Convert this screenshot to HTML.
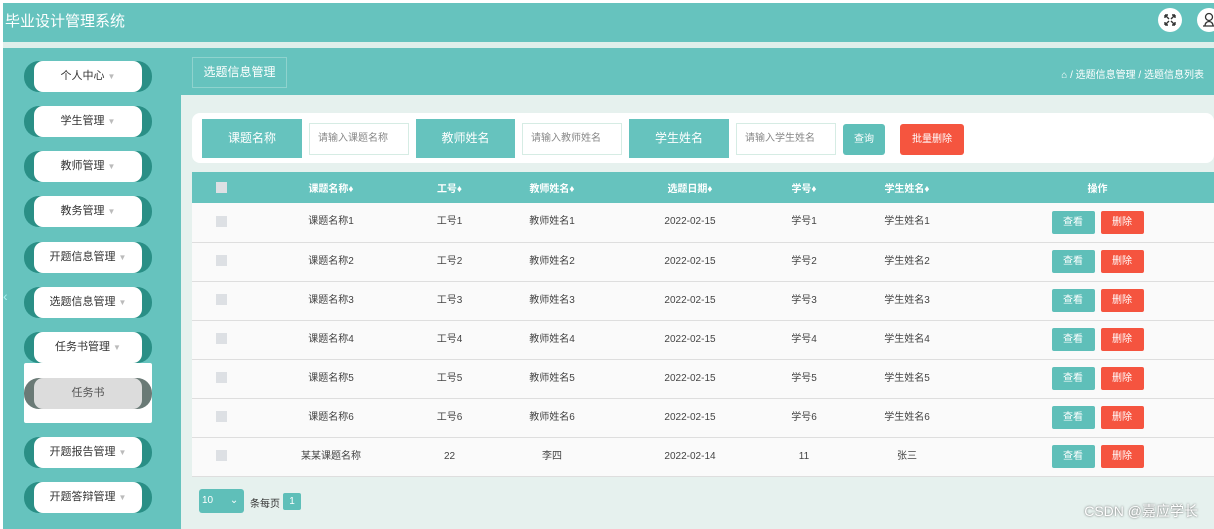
<!DOCTYPE html>
<html><head><meta charset="utf-8"><style>
*{margin:0;padding:0;box-sizing:border-box}
html,body{width:1214px;height:529px;overflow:hidden}
body{background:#fff;font-family:"Liberation Sans","Noto Sans CJK SC",sans-serif;position:relative}
.a{position:absolute}
.top{left:3px;top:3px;width:1211px;height:39px;background:#66c3be}
.title{left:5px;top:10px;color:#fff;font-size:15px}
.ic{top:8px;width:24px;height:24px;border-radius:50%;background:#fff}
.strip{left:3px;top:42px;width:1211px;height:6px;background:#dfefeb}
.side{left:3px;top:48px;width:178px;height:481px;background:#66c3be}
.pill{left:24px;width:128px;height:31px;border-radius:15px;background:#2a8f86}
.pill div{position:absolute;left:10px;right:10px;top:0;bottom:0;background:#fff;border-radius:9px;font-size:11px;color:#333;text-align:center;line-height:31px}
.pill span{color:#bbb;font-size:8px;margin-left:3px}
.main{left:181px;top:95px;width:1033px;height:434px;background:#e6f1ee}
.bc{left:181px;top:48px;width:1033px;height:47px;background:#66c3be}
.bct{left:192px;top:57px;width:95px;height:31px;border:1px solid #8fd3ce;color:#fff;font-size:12px;text-align:center;line-height:29px}
.card{left:192px;top:113px;width:1022px;height:50px;background:#fff;border-radius:8px}
.lab{top:119px;height:39px;width:100px;background:#66c3be;color:#fff;font-size:12px;text-align:center;line-height:39px}
.inp{top:123px;height:32px;width:100px;border:1px solid #d6ece4;font-size:10px;color:#888;line-height:30px;padding-left:8px;background:#fff}
.btn{color:#fff;font-size:10px;text-align:center;border-radius:3px}
table{position:absolute;left:192px;top:172px;width:1022px;border-collapse:collapse;font-size:10px;color:#444}
th{background:#66c3be;color:#fff;height:31px;font-weight:bold;font-size:10px;vertical-align:middle}
td{height:39px;text-align:center;border-bottom:1px solid #dedede;background:#fafafa;vertical-align:middle;line-height:12px}
.cb{display:inline-block;width:11px;height:11px;background:#dde0e4;vertical-align:middle}
.v,.d{display:inline-block;width:43px;height:23px;line-height:23px;color:#fff;border-radius:2px;vertical-align:middle}
.v{background:#5fbfb9}.d{background:#f5543f;margin-left:6px}
td:last-child,th:last-child{padding-left:12px}
</style></head><body>
<div class="a top"></div>
<div class="a title">毕业设计管理系统</div>
<div class="a ic" style="left:1158px"><svg width="24" height="24" viewBox="0 0 24 24" fill="none" stroke="#333" stroke-width="1.4"><path d="M7 7l4 4M17 7l-4 4M7 17l4-4M17 17l-4-4M7 7h3M7 7v3M17 7h-3M17 7v3M7 17h3M7 17v-3M17 17h-3M17 17v-3"/></svg></div>
<div class="a ic" style="left:1197px"><svg width="24" height="24" viewBox="0 0 24 24" fill="none" stroke="#333" stroke-width="1.3"><circle cx="12" cy="9" r="3.5"/><path d="M6 18h12M8 18c0-3 2-4.5 4-4.5s4 1.5 4 4.5"/></svg></div>
<div class="a strip"></div>
<div class="a side"></div>
<div class="a" style="left:3px;top:288px;color:#aee;font-size:14px">‹</div>
<div class="a pill" style="top:61px"><div>个人中心<span>▼</span></div></div>
<div class="a pill" style="top:106px"><div>学生管理<span>▼</span></div></div>
<div class="a pill" style="top:151px"><div>教师管理<span>▼</span></div></div>
<div class="a pill" style="top:196px"><div>教务管理<span>▼</span></div></div>
<div class="a pill" style="top:242px"><div>开题信息管理<span>▼</span></div></div>
<div class="a pill" style="top:287px"><div>选题信息管理<span>▼</span></div></div>
<div class="a pill" style="top:332px"><div>任务书管理<span>▼</span></div></div>
<div class="a" style="left:24px;top:363px;width:128px;height:60px;background:#fff;border-radius:2px"></div>
<div class="a pill" style="top:378px;background:#6a7a76"><div style="background:#dcdcdc;color:#555">任务书</div></div>
<div class="a pill" style="top:437px"><div>开题报告管理<span>▼</span></div></div>
<div class="a pill" style="top:482px"><div>开题答辩管理<span>▼</span></div></div>
<div class="a main"></div>
<div class="a bc"></div>
<div class="a bct">选题信息管理</div>
<div class="a" style="right:10px;top:66px;color:#fff;font-size:10px">⌂ / 选题信息管理 / 选题信息列表</div>
<div class="a card"></div>
<div class="a lab" style="left:202px">课题名称</div><div class="a inp" style="left:309px">请输入课题名称</div>
<div class="a lab" style="left:416px;width:99px">教师姓名</div><div class="a inp" style="left:522px">请输入教师姓名</div>
<div class="a lab" style="left:629px">学生姓名</div><div class="a inp" style="left:736px">请输入学生姓名</div>
<div class="a btn" style="left:843px;top:124px;width:42px;height:31px;line-height:31px;background:#5fbfb9">查询</div>
<div class="a btn" style="left:900px;top:124px;width:64px;height:31px;line-height:31px;background:#f5553f">批量删除</div>
<table>
<tr><th style="width:58px"><span class="cb"></span></th><th style="width:162px">课题名称♦</th><th style="width:75px">工号♦</th><th style="width:130px">教师姓名♦</th><th style="width:146px">选题日期♦</th><th style="width:82px">学号♦</th><th style="width:124px">学生姓名♦</th><th>操作</th></tr>
<tr><td><span class="cb"></span></td><td>课题名称1</td><td>工号1</td><td>教师姓名1</td><td>2022-02-15</td><td>学号1</td><td>学生姓名1</td><td><span class="v">查看</span><span class="d">删除</span></td></tr>
<tr><td><span class="cb"></span></td><td>课题名称2</td><td>工号2</td><td>教师姓名2</td><td>2022-02-15</td><td>学号2</td><td>学生姓名2</td><td><span class="v">查看</span><span class="d">删除</span></td></tr>
<tr><td><span class="cb"></span></td><td>课题名称3</td><td>工号3</td><td>教师姓名3</td><td>2022-02-15</td><td>学号3</td><td>学生姓名3</td><td><span class="v">查看</span><span class="d">删除</span></td></tr>
<tr><td><span class="cb"></span></td><td>课题名称4</td><td>工号4</td><td>教师姓名4</td><td>2022-02-15</td><td>学号4</td><td>学生姓名4</td><td><span class="v">查看</span><span class="d">删除</span></td></tr>
<tr><td><span class="cb"></span></td><td>课题名称5</td><td>工号5</td><td>教师姓名5</td><td>2022-02-15</td><td>学号5</td><td>学生姓名5</td><td><span class="v">查看</span><span class="d">删除</span></td></tr>
<tr><td><span class="cb"></span></td><td>课题名称6</td><td>工号6</td><td>教师姓名6</td><td>2022-02-15</td><td>学号6</td><td>学生姓名6</td><td><span class="v">查看</span><span class="d">删除</span></td></tr>
<tr><td><span class="cb"></span></td><td>某某课题名称</td><td>22</td><td>李四</td><td>2022-02-14</td><td>11</td><td>张三</td><td><span class="v">查看</span><span class="d">删除</span></td></tr>
</table>
<div class="a" style="left:199px;top:489px;width:45px;height:24px;background:#5fbfb9;border-radius:3px;color:#fff;font-size:10px;line-height:24px;padding-left:3px">10 <span style="margin-left:14px">⌄</span></div>
<div class="a" style="left:250px;top:495px;font-size:10px;color:#333">条每页</div>
<div class="a" style="left:283px;top:493px;width:18px;height:17px;background:#5fbfb9;color:#fff;font-size:10px;text-align:center;line-height:17px;border-radius:2px">1</div>
<div class="a" style="right:16px;bottom:8px;color:#fff;font-size:14px;text-shadow:0 0 2px #555">CSDN @嘉应学长</div>
</body></html>
